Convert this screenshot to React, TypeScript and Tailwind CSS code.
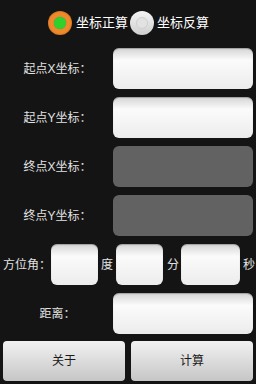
const FONT = '"Liberation Sans", "Noto Sans CJK SC", sans-serif';

function Field({ disabled = false, className = '' }: { disabled?: boolean; className?: string }) {
    return (
        <div
            className={
                'h-[41px] rounded-[6px] ' +
                (disabled
                    ? 'bg-[#626262] '
                    : 'bg-gradient-to-b from-[#d4d4d4] via-[#fbfbfb] via-30% to-[#ececec] shadow-[inset_0_1px_1px_rgba(0,0,0,0.25)] ') +
                className
            }
        />
    );
}

function Row({ label, disabled = false }: { label: string; disabled?: boolean }) {
    return (
        <div className="flex h-[41px] items-center">
            <span className="w-[113px] pl-[2px] text-center text-[12px] text-[#e2e2e2]">{label}</span>
            <Field disabled={disabled} className="w-[140px]" />
        </div>
    );
}

function Radio({ checked }: { checked: boolean }) {
    return checked ? (
        <span className="flex h-[24px] w-[24px] items-center justify-center rounded-full bg-[#ef8a2c] shadow-[inset_0_0_2px_rgba(120,50,0,0.6)]">
            <span className="h-[12px] w-[12px] rounded-full bg-[#2fd12a] shadow-[0_0_1px_#0a6]" />
        </span>
    ) : (
        <span className="flex h-[24px] w-[24px] items-center justify-center rounded-full bg-gradient-to-b from-[#f4f4f4] to-[#cfcfcf]">
            <span className="h-[12px] w-[12px] rounded-full border border-[#cfcfcf] bg-[#e2e2e2]" />
        </span>
    );
}

export default function App() {
    return (
        <div className="flex h-[384px] w-[256px] flex-col bg-[#141414]" style={{ fontFamily: FONT }}>
            <div className="flex h-[44px] items-center pl-[48px] pt-[1px]">
                <Radio checked />
                <span className="ml-[4px] text-[13px] text-white">坐标正算</span>
                <span className="ml-[2px]">
                    <Radio checked={false} />
                </span>
                <span className="ml-[3px] text-[13px] text-white">坐标反算</span>
            </div>
            <div className="mt-[4px] flex flex-col gap-[8px]">
                <Row label="起点X坐标：" />
                <Row label="起点Y坐标：" />
                <Row label="终点X坐标：" disabled />
                <Row label="终点Y坐标：" disabled />
                <div className="flex h-[41px] items-center text-[12px] text-[#e2e2e2]">
                    <span className="w-[51px] pl-[3px]">方位角：</span>
                    <Field className="w-[47px]" />
                    <span className="w-[18px] pl-[3px]">度</span>
                    <Field className="w-[47px]" />
                    <span className="w-[18px] pl-[4px]">分</span>
                    <Field className="w-[59px]" />
                    <span className="pl-[3px]">秒</span>
                </div>
                <Row label="距离：" />
            </div>
            <div className="mt-[7px] flex gap-[6px] px-[3px]">
                <button className="h-[40px] flex-1 rounded-[4px] bg-gradient-to-b from-[#f2f2f2] to-[#c6c6c6] text-[12px] text-[#1a1a1a]">
                    关于
                </button>
                <button className="h-[40px] flex-1 rounded-[4px] bg-gradient-to-b from-[#f2f2f2] to-[#c6c6c6] text-[12px] text-[#1a1a1a]">
                    计算
                </button>
            </div>
        </div>
    );
}
